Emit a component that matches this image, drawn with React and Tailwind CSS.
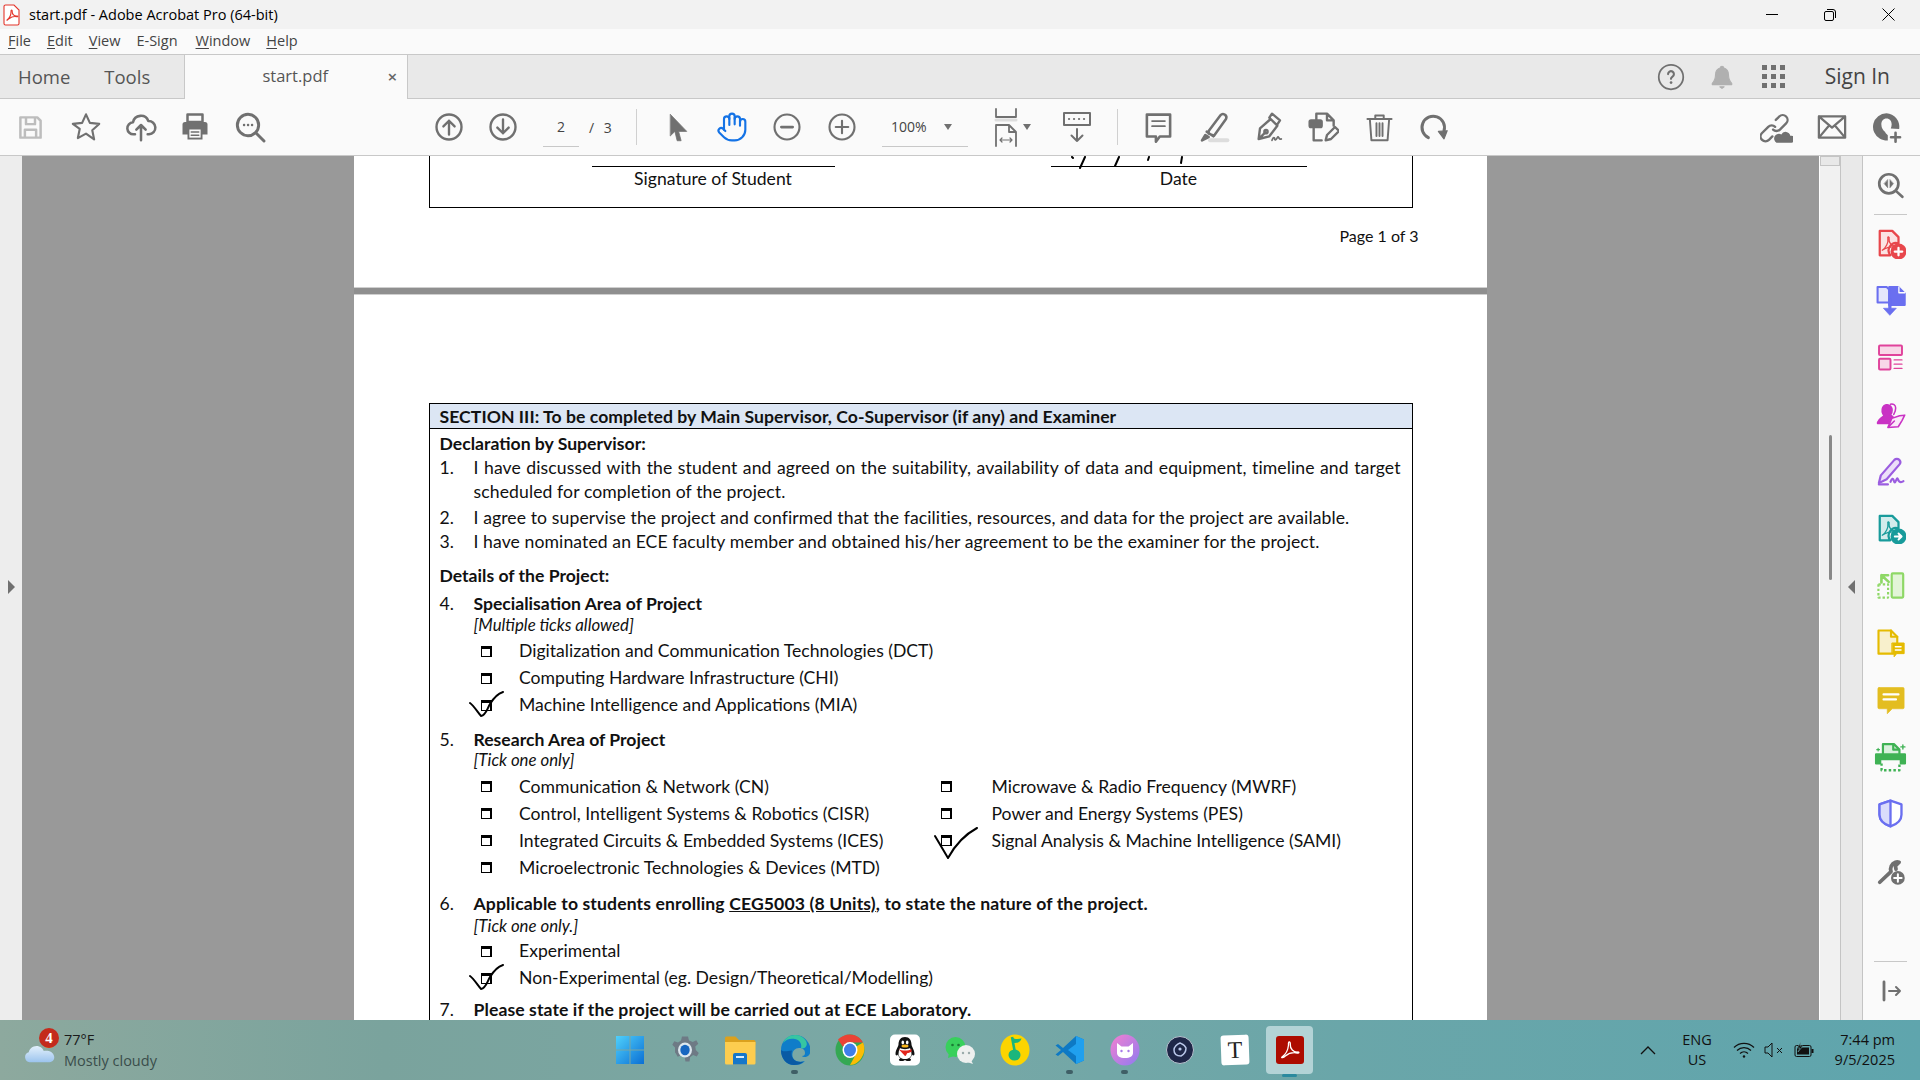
import React from "react";
import { Hand } from "lucide-react";

const G = "#707070";
const S = ({ s = 28, w, h, v = "0 0 24 24", c = G, sw = 2, fill = "none", children }) => (
  <svg width={w || s} height={h || s} viewBox={v} fill={fill} stroke={c} strokeWidth={sw} strokeLinecap="round" strokeLinejoin="round" className="block shrink-0">{children}</svg>
);
const Swirl = ({ c, sw = 1.2 }) => <path d="M5 17c3-2 5-6 4.500-9.500C9 5.500 11 6 10.500 8c-.5 3 2 5.500 5 5.500 1.500 0 1 1.500-1 1-3-.5-6 .5-9.500 2.500z" fill="none" stroke={c} strokeWidth={sw} />;

const T = {
  save: <S s={27} c="#bdbdbd" sw={2.2}><path d="M3 3h15l3 3v15H3zM8 3v6h8V3M7 21v-7h10v7" /></S>,
  star: <S s={32} sw={1.6}><path d="M12 2.500l2.900 6.400 7 .8-5.200 4.700 1.400 6.900L12 17l-6.100 3.300 1.400-6.900L2.100 9.700l7-.8z" /></S>,
  cloud: <S s={32} sw={1.9}><path d="M7.500 17.500H6.500a4.500 4.500 0 0 1-.5-9 6 6 0 0 1 11.500-1 5 5 0 0 1 .5 10h-1M12 22v-11M8.500 14l3.500-3.500 3.500 3.500" /></S>,
  print: <S s={30} fill={G} sw={0}><path d="M6 2h12v6H6z" fill="none" stroke={G} strokeWidth="2" /><path d="M4 8h16a2 2 0 0 1 2 2v8h-4v4H6v-4H2v-8a2 2 0 0 1 2-2z" /><path d="M7.500 14h9v6.500h-9z" fill="#fafafa" /><path d="M9 16h6M9 18.500h6" stroke={G} strokeWidth="1.200" /></S>,
  search: <S s={32} sw={2.2}><circle cx="10.500" cy="10.500" r="8" /><path d="M16.500 16.500L22.500 22.500" /><path d="M7.500 10.500h.1M10.500 10.500h.1M13.500 10.500h.1" strokeWidth="1.800" /></S>,
  up: <S s={30} sw={1.9}><circle cx="12" cy="12" r="10" /><path d="M12 18V7M7.500 11.500L12 7l4.500 4.500" /></S>,
  down: <S s={30} sw={1.9}><circle cx="12" cy="12" r="10" /><path d="M12 6v11M7.500 12.500L12 17l4.500-4.500" /></S>,
  cursor: <S s={30} fill={G} sw={0.6}><path d="M6 2l13 13.500h-6.500L14.500 23h-3.200L9.500 15.500 6 19z" /></S>,
  minus: <S s={30} sw={1.7}><circle cx="12" cy="12" r="10" /><path d="M7.500 12h9" strokeWidth="2.200" /></S>,
  plus: <S s={30} sw={1.7}><circle cx="12" cy="12" r="10" /><path d="M7 12h10M12 7v10" /></S>,
  fit: <S w={24} h={40} v="0 0 24 40" sw={1.8}><path d="M2 2v8h20V2" /><path d="M2 13h20" stroke="#dddddd" strokeWidth="3" /><path d="M2 39V18h13l7 7v14M15 18v7h7" /><path d="M6 33h12M6 33l2-2M6 33l2 2M18 33l-2-2M18 33l-2 2" strokeWidth="1.200" /></S>,
  read: <S w={30} h={34} v="0 0 30 34" sw={2}><path d="M2 3h26v12H2z" /><path d="M7 9h.1M12 9h.1M17 9h.1M22 9h.1" strokeWidth="2.200" /><path d="M15 19v12M9.500 25.500L15 31l5.500-5.500" /></S>,
  comment: <S s={31} sw={2}><path d="M3 2h18v17h-8l-3 4v-4H3z" /><path d="M7 7h10M7 11h10" strokeWidth="1.300" /></S>,
  hl: <S s={32} sw={1.9}><path d="M8 15L17 3c1-1.200 2.500-1 3.500 0s1 2 .5 3L12 18.500 8 17zM6.500 15.500l5 3.500" /><path d="M3 22l2.500-4 2.500 1.500z" fill={G} /><path d="M9 22h13" stroke="#dddddd" strokeWidth="3" /></S>,
  pen: <S s={32} sw={1.8}><path d="M5 21l1-8 8-7 5 5-6 8zM5 21l5-5M13 5l2-3 6 5-2 3" /><circle cx="10.500" cy="15.500" r="1.200" /><path d="M15 22c1-3 2-2 2-1s1 1 2-1 1 2 3 1" strokeWidth="1.300" /></S>,
  edit: <S s={32} sw={1.8}><path d="M7 7V2h8l5 5v4M15 2v5h5M5 13v9h6" /><rect x="2" y="7" width="9" height="5" rx="1" fill={G} /><path d="M14 22l1-4 6-6 3 3-6 6z" /></S>,
  trash: <S s={29} sw={1.6}><path d="M2 5h20M8.500 5V2h7v3M4 5l1.300 17.500h13.400L20 5M9.500 8.500v10.500M12 8.500v10.500M14.500 8.500v10.500" /></S>,
  rotate: <S s={30} sw={2.4}><path d="M7.500 20.500A9 9 0 1 1 20 15" /><path d="M15.500 15.500l7-.5-2.500 6.500z" fill={G} strokeWidth="1" /></S>,
  link: <S s={33} sw={1.7}><path d="M9 18.500l-2.500 2.500a3.500 3.500 0 0 1-5-5l4.500-4.500a3.500 3.500 0 0 1 5 0M11.500 6.500L14 4a3.500 3.500 0 0 1 5 5l-4.500 4.500a3.500 3.500 0 0 1-5 0" /><path d="M12 23h11a2.500 2.500 0 0 0-1-5 3.500 3.500 0 0 0-6.500-1 3 3 0 0 0-3.500 6z" fill={G} strokeWidth="0" /></S>,
  mail: <S s={30} sw={1.8}><path d="M1.500 3.500h21v17h-21zM1.500 3.500L12 12.500l10.500-9M1.500 20.500l8-9.500M22.500 20.500l-8-9.500" /></S>,
  user: <S s={31} fill={G} sw={0}><path d="M12 1a10.500 10.500 0 0 0-5 19.700c2 1.100 4.500 1.500 6 1.300v-4c-1-1-2-1.500-2-2.500-1.500-1-3-3-3-6 0-2.500 1.500-4.500 4-4.500s4 2 4 4.500c0 1.300-.3 2.300-.7 3.300l6.500.3A10.500 10.500 0 0 0 12 1z" /><path d="M19 16v7M15.500 19.500h7" stroke={G} strokeWidth="2" /></S>,
};

const R = {
  find: <S s={27} sw={2.4}><circle cx="10.500" cy="10.500" r="8.500" /><path d="M17 17l5.500 5" /><path d="M9.500 7v7l-3-3.500zM11.500 7v7l3-3.500z" fill={G} strokeWidth=".5" /></S>,
  create: <S s={30} c="#e8474c" sw={1.8} fill="#fbe3e3"><path d="M3 1.500h10l5 5v5a6 6 0 0 0-6.500 9.500H3z" /><Swirl c="#e8474c" sw={1} /><circle cx="18" cy="18" r="5.500" fill="#e8474c" /><path d="M15 18h6M18 15v6" stroke="#fff" strokeWidth="1.800" /></S>,
  combine: <S s={31} c="#6a6ff0" sw={1.6}><path d="M2 1.500h7l2 2v10H2z" fill="#e5e6fb" /><path d="M11 1.500h7l5 5v9h-8l-4 0z" fill="#6a6ff0" /><path d="M18.500 1.500v4.500h4.500" stroke="#fff" strokeWidth="1" /><path d="M12.500 11v7h4l-5 5.500-5-5.500h4v-7z" fill="#6a6ff0" strokeWidth=".5" /></S>,
  org: <S s={29} c="#e0439b" sw={1.6}><rect x="2.500" y="2" width="19" height="8" rx=".8" fill="#f8d8e8" /><rect x="2.500" y="13" width="9.500" height="9" rx=".8" fill="#f8d8e8" /><path d="M15 14h6.500M15 17.500h6.500M15 21h6.500" strokeWidth="1.100" /></S>,
  req: <S s={31} c="#c932c4" sw={1.2}><path d="M2 19c0-3 2.500-4.500 5-6-1.500-2-2-4-1-6.500 1-2 4-3 6-1 2 2.500 1 5.500 0 7 1 .5 1.500 1 2 1.500-2 1.500-3 3.500-3.500 5z" fill="#c932c4" /><path d="M12 4c2-.5 4 .5 4 3s-1 4-1.500 5" fill="none" /><path d="M10 22l3-7 6-2 4-.5-2 4-3 5zM10 22l5-5" fill="#fbe9f9" /></S>,
  sign: <S s={31} c="#9b5de0" sw={1.7}><path d="M3 21l1.500-6L15 3c1-1 2.800-1 3.800 0s1 2.500.2 3.500L9 18z" fill="#ecdff9" /><path d="M3 22h7M12 20c1-3 2-3 2.500-1s1 2 2-.5 1-.5 2 1 2.500.5 3.500 0" strokeWidth="1.700" /></S>,
  share: <S s={30} c="#189b9b" sw={1.8} fill="#d3ecec"><path d="M3 1.500h10l5 5v5a6 6 0 0 0-6.500 9.500H3z" /><Swirl c="#189b9b" sw={1} /><circle cx="18" cy="18" r="5.500" fill="#189b9b" /><path d="M15 18h5M18 15.500l2.500 2.500-2.500 2.500" stroke="#fff" strokeWidth="1.500" /></S>,
  export: <S s={29} c="#8ed866" sw={1.8}><rect x="13" y="2" width="9.500" height="20" rx=".8" fill="#e2f5d7" /><path d="M2 11h8v11H2z" strokeDasharray="2 1.600" strokeLinecap="butt" /><path d="M10 3.500H4.500M4.500 3.500v6M4.500 3.500l6 5.500" stroke="#8ed866" strokeWidth="2.200" /></S>,
  note: <S s={30} c="#e5bb00" sw={1.7}><path d="M14 20.500H2V2h10l5 5v5" fill="#f8f0cc" /><path d="M12 2v5h5" /><path d="M13 12h9.500v8.500h-6l-2 2.500v-2.500H13z" fill="#e5bb00" strokeWidth=".8" /><path d="M15.500 15h4.500M15.500 17.500h4.500" stroke="#fff" strokeWidth="1.200" /></S>,
  cmt: <S s={30} c="#e3bd20" sw={0.5} fill="#e3bd20"><path d="M2.500 2h19a1 1 0 0 1 1 1v15a1 1 0 0 1-1 1H13l-4 4v-4H2.500a1 1 0 0 1-1-1V3a1 1 0 0 1 1-1z" /><path d="M6 7.500h12M6 11.500h10" stroke="#fff" strokeWidth="1.700" /></S>,
  scan: <S s={33} c="#3fb254" sw={1.6}><path d="M6.500 10V3h8l4 4v3" fill="#d9f0dd" /><path d="M14 3v4h4" /><path d="M1.500 10.500h21v6.500h-3v-3h-15v3h-3z" fill="#3fb254" /><path d="M5.500 17v5h13v-5" strokeDasharray="1.800 1.600" strokeWidth="1.700" strokeLinecap="butt" /><path d="M21 3.500v3M19.500 5h3" strokeWidth="1" /><path d="M3 6v2M2 7h2" strokeWidth=".8" /></S>,
  shield: <S s={31} c="#6a6ff0" sw={1.8}><path d="M12 2l8.500 3v8c0 4.500-4 7.500-8.500 9-4.500-1.500-8.500-4.500-8.500-9V5z" fill="#fff" /><path d="M12 2L3.500 5v8c0 4.500 4 7.500 8.500 9z" fill="#dadcfb" /></S>,
  more: <S s={30} sw={2.400}><path d="M3 21l9-8.500c-1-3 .5-6.500 3.500-7.500 1-.3 2-.3 3 0l-3 3 .5 2.500" fill="none" strokeWidth="3" /><circle cx="17.500" cy="17.500" r="5.500" fill={G} strokeWidth="0" /><path d="M14.500 17.500h6M17.500 14.500v6" stroke="#fff" strokeWidth="1.600" /></S>,
};

const Task = {
  win: <svg width="30" height="30" viewBox="0 0 30 30" className="block"><defs><linearGradient id="wn" x1="0" y1="0" x2="1" y2="1"><stop offset="0" stopColor="#4fd0fb" /><stop offset="1" stopColor="#0b6fd4" /></linearGradient></defs><path d="M1 1h13.500v13.500H1zM15.500 1H29v13.500H15.500zM1 15.500h13.500V29H1zM15.500 15.500H29V29H15.500z" fill="url(#wn)" /></svg>,
  gear: <svg width="30" height="30" viewBox="0 0 30 30" className="block"><path d="M15 1.500l3 0 1 4 3.800 1.600 3.500-1.800 2 3.500-3 2.800.5 3.500 3 2.800-2 3.500-3.700-1.500-3 2.400-.6 4.200h-4l-.9-4.200-3.300-2-3.600 1.500-2-3.500L5 17.500v-5L2.300 9.700l2-3.500L8 7.500 11 5.600 12 1.500z" fill="#6e7a85" /><ellipse cx="15" cy="15" rx="7" ry="7.500" fill="#dce7ee" /><ellipse cx="15" cy="15" rx="4.700" ry="5.200" fill="#1766c0" /></svg>,
  folder: <svg width="32" height="30" viewBox="0 0 32 30" className="block"><path d="M1 3a1.500 1.500 0 0 1 1.500-1.500h9L15 5h15a1.500 1.500 0 0 1 1.500 1.500V10H1z" fill="#dba11d" /><path d="M1 7h30.500v21a1.500 1.500 0 0 1-1.500 1.500H2.500A1.500 1.500 0 0 1 1 28z" fill="#fdcd4f" /><path d="M9 20a2 2 0 0 1 2-2h10a2 2 0 0 1 2 2v9.500H9z" fill="#1677c9" /><path d="M12 22h8" stroke="#d8ecfb" strokeWidth="2" /></svg>,
  edge: <svg width="30" height="32" viewBox="0 0 30 32" className="block"><path d="M15 1C7 1 1 8 1 16c0 9 6 15 13 15 5 0 8-1 11-4-4 1.500-10 1-12-3-2-5 1-10 6-10 4 0 6 2 6 5 0 2-1 3-3 3 1 1.500 5 1.500 7-1 2-2.500 2-6 .5-10C27 5 22 1 15 1z" fill="#0f7dc9" /><path d="M15 1C9 1 5 4.500 3 9c3-4 8-5 12-4 5 1 7 5 6 9 1 .5 3 1 5-1.500C29 9 24 1 15 1z" fill="#37c6a2" /><path d="M1 16c0 9 6 15 13 15 4 0 7-1 10-3.500-3 .8-8 1-11-3-1.500-2-2-5-1-8C7 17 3 18 1 16z" fill="#0a5aa4" /></svg>,
  chrome: <svg width="30" height="32" viewBox="0 0 30 32" className="block"><ellipse cx="15" cy="16" rx="14.500" ry="15.500" fill="#34a853" /><path d="M15 .5c5.500 0 10.500 3 13 8H15a7.500 7.500 0 0 0-7 4.500L3 5.500C6 2.500 10 .5 15 .5z" fill="#ea4335" /><path d="M28 8.500c2 4.500 2 10-1 14.500-2.500 4.500-7 8-12 8l5.500-10a7 7 0 0 0 0-8z" fill="#fbbc05" /><ellipse cx="15" cy="16" rx="7.500" ry="8" fill="#fff" /><ellipse cx="15" cy="16" rx="6" ry="6.500" fill="#3f7fe8" /></svg>,
  qq: <svg width="30" height="32" viewBox="0 0 30 32" className="block"><rect width="30" height="31" rx="5" y=".5" fill="#fff" /><path d="M15 3c-4.500 0-6.500 3.500-6.500 7.500 0 2-3 5.500-3 9.500 0 1.500 1.500 2 2.500.5.500 2 1.500 3 2.500 4-2 .5-2.500 2.500 1 2.500 2 0 3-.5 3.500-1 .5.500 1.500 1 3.500 1 3.500 0 3-2 1-2.500 1-1 2-2 2.500-4 1 1.500 2.500 1 2.500-.5 0-4-3-7.500-3-9.500C21.500 6.500 19.500 3 15 3z" fill="#111" /><path d="M10 14c1.500 1.500 8.500 1.500 10 0 1 2 1.500 4 1.500 6 0 3-3 5-6.500 5s-6.500-2-6.500-5c0-2 .5-4 1.500-6z" fill="#fff" /><path d="M8.500 15c3 2 10 2 13 0v3c-2 .5-3 1-4 1-1.500 1-1 3-2.500 3" fill="#e2261d" /><ellipse cx="15" cy="12" rx="3.500" ry="1.500" fill="#f8b51c" /><ellipse cx="12.800" cy="8.500" rx="1.300" ry="2" fill="#fff" /><ellipse cx="17.200" cy="8.500" rx="1.300" ry="2" fill="#fff" /></svg>,
  wechat: <svg width="30" height="30" viewBox="0 0 30 30" className="block"><ellipse cx="10.500" cy="12" rx="10" ry="10" fill="#38d05c" /><path d="M4 18l-1 5 6-2z" fill="#38d05c" /><circle cx="7.500" cy="10" r="1.300" fill="#1a7a35" /><circle cx="13.500" cy="10" r="1.300" fill="#1a7a35" /><ellipse cx="21" cy="19" rx="9" ry="9" fill="#eef0ef" /><path d="M26 25l2 4-6-2z" fill="#eef0ef" /><circle cx="18" cy="18" r="1.200" fill="#9aa" /><circle cx="24" cy="18" r="1.200" fill="#9aa" /></svg>,
  music: <svg width="30" height="32" viewBox="0 0 30 32" className="block"><ellipse cx="15" cy="16" rx="14.500" ry="15.500" fill="#fcd400" /><path d="M12 3l3 16" stroke="#1ab67c" strokeWidth="2.600" /><path d="M12 3c3 3 7 2 9.500 1.500-1 3-3 5-8 4.500z" fill="#1ab67c" /><ellipse cx="14.500" cy="21" rx="6" ry="5.500" fill="#1ab67c" /></svg>,
  vsc: <svg width="30" height="30" viewBox="0 0 30 30" className="block"><path d="M21 1l8 3.500v21L21 29 8 17l-5 4-2.500-1.500L6 15 .5 10.500 3 9l5 4z" fill="#0d79c4" /><path d="M21 1l8 3.500v21L21 29 21 21 13 15l8-6z" fill="#20a0ee" /></svg>,
  cat: <svg width="30" height="32" viewBox="0 0 30 32" className="block"><defs><linearGradient id="ct" x1="0" y1="0" x2="1" y2="1"><stop offset="0" stopColor="#f47fd0" /><stop offset="1" stopColor="#8f7cf0" /></linearGradient></defs><ellipse cx="15" cy="16" rx="14.500" ry="15.500" fill="url(#ct)" /><path d="M7 9l4.500 3.500h7L23 9v10c0 3-3 5-8 5s-8-2-8-5z" fill="#fff" /><circle cx="11.500" cy="17" r="1.200" fill="#a77be8" /><circle cx="18.500" cy="17" r="1.200" fill="#a77be8" /></svg>,
  dark: <svg width="28" height="28" viewBox="0 0 28 28" className="block"><circle cx="14" cy="14" r="13.500" fill="#1f2748" stroke="#b8c4d0" strokeWidth="1" /><path d="M14 7c2 1 5 2 6 5 0 3-1 6-5 8-4 0-7-2-7-6 0-3 3-6 6-7z" fill="none" stroke="#b9c6e8" strokeWidth="1.500" /><circle cx="14" cy="13" r="1.600" fill="#b9c6e8" /></svg>,
  acro: <svg width="28" height="28" viewBox="0 0 28 28" className="block"><rect width="28" height="28" rx="3" fill="#ad0b00" /><path d="M6 21c3-2 6-7 6.500-12-.5-4 2-4 1.800-.5-.3 4 3 8 7.700 7.500 1.500 0 1 1.500-.7 1-4-.8-9 .5-12 3-2 2-4.500 2-3.300 1z" fill="none" stroke="#fff" strokeWidth="1.300" /></svg>,
};

const U = ({ children }) => <span className="underline underline-offset-2">{children}</span>;

const Box = () => <div className="h-[11px] w-[11px] border-[1.5px] border-t-[3px] border-r-[2px] border-black" />;
const Tick = ({ cls, w, h, d }) => (
  <svg width={w} height={h} viewBox={`0 0 ${w} ${h}`} fill="none" stroke="#000" strokeWidth="2" strokeLinecap="round" className={cls}><path d={d} /></svg>
);

const Opt = ({ children, mt = "", tick }) => (
  <div className={`relative flex h-5 items-center pl-[51px] pt-[2px] ${mt}`}>
    <div className="w-[38.5px] shrink-0"><Box /></div>
    <span>{children}</span>
    {tick}
  </div>
);
const Num = ({ n, children, mt = "", cls = "" }) => (
  <div className={`flex h-5 items-center pl-[10px] ${mt} ${cls}`}>
    <span className="w-[34px] shrink-0 font-normal">{n}</span>
    <span>{children}</span>
  </div>
);
const Two = ({ l, r, mt, tick }) => (
  <div className={`relative flex h-5 items-center pt-[1px] ${mt}`}>
    <div className="flex w-[510px] shrink-0 items-center pl-[51px]"><div className="w-[38.5px] shrink-0"><Box /></div><span>{l}</span></div>
    {r && <div className="flex items-center"><div className="w-[52px] shrink-0 pl-[1px]"><Box /></div><span>{r}</span></div>}
    {tick}
  </div>
);

const Check1 = () => <Tick cls="absolute left-[38px] top-[-3px]" w={38} h={28} d="M2 12c3 2 7 8 11 13 5-1 6-7 9-12 3-5 7-10 13-12" />;

const Doc = () => (
  <div className="font-['Lato',sans-serif] text-[17.6px] text-[#111] leading-5">
    <div className="flex h-[131px] flex-col bg-white pl-[75px] pr-[74px]">
      <div className="relative grid h-[52px] shrink-0 grid-cols-[162px_243px_216px_256px_107px] border-x border-b border-black">
        <div />
        <div className="flex h-full flex-col items-center">
          <div className="mt-[9.5px] h-[1px] w-full bg-black" />
          <div className="mt-[2px]">Signature of Student</div>
        </div>
        <div />
        <div className="relative flex h-full flex-col items-center">
          <div className="mt-[9.5px] h-[1px] w-full bg-black" />
          <div className="mt-[2px]">Date</div>
          <svg width="130" height="14" viewBox="0 0 130 14" fill="none" stroke="#000" strokeWidth="2" strokeLinecap="round" className="absolute left-[6px] top-0"><path d="M15 1l1 1M28 1l-5 11M62 1l-4 9M92 1l-1 3M125 1l-1 6" /></svg>
        </div>
        <div />
      </div>
      <div className="mt-[18px] mr-[-6px] self-end text-[16px]">Page 1 of 3</div>
    </div>
    <div className="h-[8px] border-y border-[#cfcfcf] bg-[#8f8f8f]" />
    <div className="bg-white pl-[75px] pr-[74px] pt-[108px]">
      <div className="border-x border-black pb-[40px]">
        <div className="flex h-[26px] items-center border-y border-black bg-[#dce6f4] pl-[10px] pt-[2px] font-bold tracking-[0.05px]">SECTION III: To be completed by Main Supervisor, Co-Supervisor (if any) and Examiner</div>
        <div className="mt-1 flex h-5 items-center pl-[10px] pt-[1px] font-bold">Declaration by Supervisor:</div>
        <Num n="1." mt="mt-[5px]" cls="tracking-[0.1px] [word-spacing:0.85px]">I have discussed with the student and agreed on the suitability, availability of data and equipment, timeline and target</Num>
        <Num n="" mt="mt-1" cls="tracking-[0.1px]">scheduled for completion of the project.</Num>
        <Num n="2." mt="mt-[6px]" cls="tracking-[0.1px]">I agree to supervise the project and confirmed that the facilities, resources, and data for the project are available.</Num>
        <Num n="3." mt="mt-1" cls="tracking-[0.09px]">I have nominated an ECE faculty member and obtained his/her agreement to be the examiner for the project.</Num>
        <div className="mt-[14px] flex h-5 items-center pl-[10px] font-bold">Details of the Project:</div>
        <Num n="4." mt="mt-2" cls="font-bold">Specialisation Area of Project</Num>
        <Num n="" mt="mt-px" cls="italic text-[16.8px]">[Multiple ticks allowed]</Num>
        <Opt mt="mt-[5px]">Digitalization and Communication Technologies (DCT)</Opt>
        <Opt mt="mt-[7px]">Computing Hardware Infrastructure (CHI)</Opt>
        <Opt mt="mt-[7px]" tick={<Check1 />}>Machine Intelligence and Applications (MIA)</Opt>
        <Num n="5." mt="mt-4" cls="font-bold">Research Area of Project</Num>
        <Num n="" cls="italic text-[16.8px]">[Tick one only]</Num>
        <Two mt="mt-[6px]" l="Communication & Network (CN)" r="Microwave & Radio Frequency (MWRF)" />
        <Two mt="mt-[7px]" l="Control, Intelligent Systems & Robotics (CISR)" r="Power and Energy Systems (PES)" />
        <Two mt="mt-[7px]" l="Integrated Circuits & Embedded Systems (ICES)" r="Signal Analysis & Machine Intelligence (SAMI)" tick={<Tick cls="absolute left-[504px] top-[-3px]" w={44} h={32} d="M1 9L14 31C20 20 30 8 43 1" />} />
        <Two mt="mt-[7px]" l="Microelectronic Technologies & Devices (MTD)" />
        <Num n="6." mt="mt-[17px]" cls="font-bold tracking-[0.12px]"><span>Applicable to students enrolling <span className="underline">CEG5003 (8 Units)</span>, to state the nature of the project.</span></Num>
        <Num n="" mt="mt-0.5" cls="italic text-[16.8px]">[Tick one only.]</Num>
        <Opt mt="mt-1">Experimental</Opt>
        <Opt mt="mt-[7px]" tick={<Check1 />}>Non-Experimental (eg. Design/Theoretical/Modelling)</Opt>
        <Num n="7." mt="mt-[13px]" cls="font-bold tracking-[0.09px]">Please state if the project will be carried out at ECE Laboratory.</Num>
      </div>
    </div>
  </div>
);

const Ti = ({ w, children }) => <div className={`flex h-full shrink-0 items-center justify-center ${w}`}>{children}</div>;
const RI = ({ children }) => <div className="flex h-[57px] items-center justify-center">{children}</div>;
const TB = ({ children, cls = "" }) => <div className={`relative flex h-full w-[55px] shrink-0 items-center justify-center ${cls}`}>{children}</div>;
const Dot = ({ active }) => active
  ? <div className="absolute bottom-[3px] left-[20px] h-[3px] w-[15px] rounded-sm bg-[#2a8a9e]" />
  : <div className="absolute bottom-[6px] left-[24px] h-[4px] w-[7px] rounded-full bg-[#3f5f66]" />;

export default function App() {
  return (
    <div className="flex h-[1080px] w-[1920px] flex-col overflow-hidden bg-[#999] font-['Open_Sans',sans-serif] text-[#333]">
      <div className="flex h-[29px] shrink-0 items-center bg-[#f2f2f2] text-black">
        <svg width="18" height="22" viewBox="0 0 18 22" fill="none" stroke="#e3352b" strokeWidth="1.100" className="ml-[3px] block"><path d="M2.500 1h8.500l5 5v13.500a1.500 1.500 0 0 1-1.500 1.500h-12A1.500 1.500 0 0 1 1 19.500v-17A1.500 1.500 0 0 1 2.500 1z" fill="#fff" /><path d="M4 16c2-1.500 4-5 4-8-.3-2.500 1.300-2.500 1.200-.5-.2 2.500 2 5 5 4.500 1 0 .7 1-.5.700-2.500-.5-5.500.3-7.700 2-1 1-2.500 2-2 1.300z" /></svg>
        <span className="ml-[8px] text-[14.5px]">start.pdf - Adobe Acrobat Pro (64-bit)</span>
        <div className="ml-auto flex items-center">
          <div className="flex w-[57px] justify-center"><div className="h-px w-3 bg-black" /></div>
          <div className="flex w-[59px] justify-center"><svg width="12" height="12" viewBox="0 0 12 12" fill="none" stroke="#000" strokeWidth="1"><rect x=".5" y="2.500" width="9" height="9" rx="1.500" /><path d="M3 .5h6a2.500 2.500 0 0 1 2.500 2.500v6" /></svg></div>
          <div className="flex w-[58px] justify-center"><svg width="13" height="13" viewBox="0 0 13 13" stroke="#000" strokeWidth="1"><path d="M.5.5l12 12M12.500.5l-12 12" /></svg></div>
          <div className="w-[3px]" />
        </div>
      </div>
      <div className="flex h-[26px] shrink-0 items-center gap-[16px] border-b border-[#c8c8c8] bg-[#fafafa] pb-px pl-[8px] text-[14.5px] text-[#444]">
        <span><U>F</U>ile</span><span><U>E</U>dit</span><span><U>V</U>iew</span><span>E-Sign</span><span className="ml-[2px]"><U>W</U>indow</span><span><U>H</U>elp</span>
      </div>
      <div className="flex h-[44px] shrink-0 items-center border-b border-[#c8c8c8] bg-[#e9e9e9]">
        <span className="ml-[18px] text-[18.5px] text-[#555]">Home</span>
        <span className="ml-[34px] text-[18.5px] text-[#555]">Tools</span>
        <div className="relative ml-[34px] flex h-[44px] w-[224px] items-center justify-center border-x border-[#c8c8c8] bg-[#fafafa] pr-[2px] text-[16.5px] text-[#555]">
          start.pdf
          <span className="absolute right-[10px] top-[9px] text-[17px] font-semibold text-[#666]">×</span>
        </div>
        <div className="ml-auto flex items-center">
          <S s={28} sw={1.5}><circle cx="12" cy="12" r="10.500" /><path d="M9.500 9.500a2.500 2.500 0 1 1 3.800 2.100c-.9.600-1.300 1-1.300 2" strokeWidth="1.800" /><path d="M12 16.800h.1" strokeWidth="2.200" /></S>
          <div className="ml-[24px]"><S s={26} c="#b0b0b0" fill="#b0b0b0" sw={1}><path d="M12 2c-1 0-1.500.6-1.500 1.500C7.500 4.500 6 7 6 10c0 4-1 6-3 8v1h18v-1c-2-2-3-4-3-8 0-3-1.500-5.500-4.500-6.500C13.500 2.600 13 2 12 2zM10 21h4l-2 1.500z" /></S></div>
          <div className="ml-[27px] grid grid-cols-3 gap-[4px]">{[1,2,3,4,5,6,7,8,9].map(i => <div key={i} className="h-[5px] w-[5px] bg-[#707070]" />)}</div>
          <span className="ml-[40px] mr-[30px] text-[21px] font-medium text-[#444]">Sign In</span>
        </div>
      </div>
      <div className="flex h-[57px] shrink-0 items-center border-b border-[#c8c8c8] bg-[#fafafa] pl-[3px] text-[#444]">
        <Ti w="w-[55px]">{T.save}</Ti>
        <Ti w="w-[55px]">{T.star}</Ti>
        <Ti w="w-[55px]">{T.cloud}</Ti>
        <Ti w="w-[53px]">{T.print}</Ti>
        <Ti w="w-[58px]">{T.search}</Ti>
        <div className="w-[143px] shrink-0" />
        <Ti w="w-[54px]">{T.up}</Ti>
        <Ti w="w-[54px]">{T.down}</Ti>
        <div className="ml-[13px] flex h-[40px] w-[36px] shrink-0 items-center justify-center border-b border-[#c8c8c8] text-[14px]">2</div>
        <span className="ml-[10px] w-[47px] shrink-0 text-[14px] tracking-[3px]">/ 3</span>
        <div className="h-[36px] w-px shrink-0 bg-[#d0d0d0]" />
        <div className="w-[15px] shrink-0" />
        <Ti w="w-[52px]">{T.cursor}</Ti>
        <Ti w="w-[56px]"><Hand size={32} strokeWidth={1.6} color="#1473e6" /></Ti>
        <Ti w="w-[54px]">{T.minus}</Ti>
        <Ti w="w-[55px]">{T.plus}</Ti>
        <div className="ml-[13px] flex h-[40px] w-[86px] shrink-0 items-center border-b border-[#c8c8c8] pl-[9px] text-[14px]"><span>100%</span><span className="ml-[17px] h-0 w-0 border-x-[4px] border-t-[6px] border-x-transparent border-t-[#707070]" /></div>
        <div className="ml-[26px] flex h-full items-center gap-[5px]">{T.fit}<span className="h-0 w-0 border-x-[4px] border-t-[6px] border-x-transparent border-t-[#707070]" /></div>
        <div className="ml-[31px]">{T.read}</div>
        <div className="ml-[25px] h-[36px] w-px shrink-0 bg-[#d0d0d0]" />
        <div className="w-[13px] shrink-0" />
        <Ti w="w-[55px]">{T.comment}</Ti>
        <Ti w="w-[55px]">{T.hl}</Ti>
        <Ti w="w-[54px]">{T.pen}</Ti>
        <Ti w="w-[56px]">{T.edit}</Ti>
        <Ti w="w-[56px]">{T.trash}</Ti>
        <Ti w="w-[53px]">{T.rotate}</Ti>
        <div className="ml-auto flex h-full items-center pr-[6px]">
          <Ti w="w-[55px]">{T.link}</Ti>
          <Ti w="w-[55px]">{T.mail}</Ti>
          <Ti w="w-[55px]">{T.user}</Ti>
        </div>
      </div>
      <div className="flex min-h-0 flex-1">
        <div className="relative flex w-[22px] shrink-0 items-center justify-center bg-[#ededed]">
          <span className="mt-[-2px] h-0 w-0 border-y-[7px] border-l-[7px] border-y-transparent border-l-[#707070]" />
        </div>
        <div className="flex min-w-0 flex-1 justify-center overflow-hidden border-r border-white bg-[#999] pr-[1px]">
          <div className="w-[1133px] shrink-0"><Doc /></div>
        </div>
        <div className="relative w-[21px] shrink-0 border-r border-[#c4c4c4] bg-[#f1f1f1]">
          <div className="h-[10px] border border-[#c4c4c4] bg-[#e8e8e8]" />
          <div className="absolute left-[9px] top-[279px] h-[145px] w-[3px] rounded-full bg-[#888]" />
        </div>
        <div className="flex w-[22px] shrink-0 items-center justify-center border-r border-[#c4c4c4] bg-[#e9e9e9]">
          <span className="mt-[-2px] h-0 w-0 border-y-[7px] border-r-[7px] border-y-transparent border-r-[#707070]" />
        </div>
        <div className="flex w-[57px] shrink-0 flex-col bg-[#fafafa] pr-[2px]">
          <div className="flex h-[58px] shrink-0 items-center justify-center">{R.find}</div>
          <div className="mx-[11px] h-px shrink-0 bg-[#c8c8c8]" />
          <RI>{R.create}</RI><RI>{R.combine}</RI><RI>{R.org}</RI><RI>{R.req}</RI><RI>{R.sign}</RI><RI>{R.share}</RI>
          <RI>{R.export}</RI><RI>{R.note}</RI><RI>{R.cmt}</RI><RI>{R.scan}</RI><RI>{R.shield}</RI><RI>{R.more}</RI>
          <div className="mx-[11px] mt-auto h-px shrink-0 bg-[#c8c8c8]" />
          <div className="flex h-[58px] shrink-0 items-center justify-center">
            <S s={24} sw={2}><path d="M5 3v18" strokeWidth="2.800" /><path d="M10 12h11M17 8l4 4-4 4" /></S>
          </div>
        </div>
      </div>
      <div className="relative flex h-[60px] shrink-0 items-center bg-[linear-gradient(90deg,#8da99e_0%,#7aa39d_20%,#7aa8a5_45%,#6aa6a9_70%,#5fa5ad_100%)]">
        <div className="relative h-full w-[64px] shrink-0">
          <div className="absolute left-[44px] top-[20px] h-[8px] w-[10px] rounded-full bg-[#e8882c]" />
          <svg width="32" height="21" viewBox="0 0 34 24" preserveAspectRatio="none" className="absolute left-[24px] top-[23px]"><defs><linearGradient id="cl" x1="0" y1="0" x2="0" y2="1"><stop offset="0" stopColor="#e3f0fb" /><stop offset="1" stopColor="#9cc4ee" /></linearGradient></defs><path d="M6 22a6 6 0 0 1-1-11.500C6 6 11 2 16 4c3 1 4 3 5 5 5-1 10 1 11 6s-3 7-6 7z" fill="url(#cl)" /></svg>
          <div className="absolute left-[39px] top-[8px] flex h-5 w-5 items-center justify-center rounded-full bg-[#c42b1c] font-['Liberation_Serif',serif] text-[15px] font-bold text-white">4</div>
        </div>
        <div className="flex flex-col text-[14.5px] leading-[21px]">
          <span className="text-[#1a1a1a]">77°F</span>
          <span className="text-[#3a4d4b]">Mostly cloudy</span>
        </div>
        <div className="absolute left-[602px] top-0 flex h-full">
          <TB>{Task.win}</TB><TB>{Task.gear}</TB><TB>{Task.folder}</TB>
          <TB>{Task.edge}<Dot /></TB><TB>{Task.chrome}</TB><TB>{Task.qq}</TB><TB>{Task.wechat}</TB><TB>{Task.music}</TB>
          <TB>{Task.vsc}<Dot /></TB><TB>{Task.cat}<Dot /></TB><TB>{Task.dark}</TB>
          <TB><div className="flex h-[30px] w-[28px] rotate-[-2deg] items-center justify-center rounded-[3px] bg-white font-['Liberation_Serif',serif] text-[24px] text-[#222]">T</div></TB>
          <TB><div className="absolute left-[4px] top-[6px] h-[48px] w-[47px] rounded-[4px] bg-[#b3d3d6]" /><div className="relative">{Task.acro}</div><Dot active /></TB>
        </div>
        <div className="ml-auto flex items-center text-[#111]">
          <svg width="16" height="10" viewBox="0 0 16 10" fill="none" stroke="#111" strokeWidth="1.300"><path d="M1 9l7-7 7 7" /></svg>
          <div className="ml-[24px] flex w-[34px] flex-col items-center text-[14.5px] leading-[20px]"><span>ENG</span><span>US</span></div>
          <svg width="22" height="16" viewBox="0 0 22 16" fill="none" stroke="#111" strokeWidth="1.200" className="ml-[19px]"><path d="M1 5.500a14 14 0 0 1 20 0M4 8.500a10 10 0 0 1 14 0M7 11.500a6 6 0 0 1 8 0" /><circle cx="11" cy="14.500" r="1.200" fill="#111" stroke="none" /></svg>
          <svg width="20" height="16" viewBox="0 0 20 16" fill="none" stroke="#111" strokeWidth="1" className="ml-[9px]"><path d="M1 5h3l4-4v14l-4-4H1zM13 6l5 5M18 6l-5 5" /></svg>
          <svg width="20" height="16" viewBox="0 0 20 16" className="ml-[10px]"><rect x="1" y="3.500" width="16" height="11" rx="1.500" fill="none" stroke="#111" /><rect x="3" y="5.500" width="12" height="7" fill="#111" /><rect x="17.500" y="7" width="2" height="4" fill="#111" /><path d="M7 0L3 6h3l-2 4 5-6H6z" fill="#111" stroke="#6aa6a9" strokeWidth=".6" /></svg>
          <div className="ml-[11px] mr-[25px] flex w-[70px] flex-col items-end text-[14.5px] leading-[20px]"><span>7:44 pm</span><span>9/5/2025</span></div>
        </div>
      </div>
    </div>
  );
}
